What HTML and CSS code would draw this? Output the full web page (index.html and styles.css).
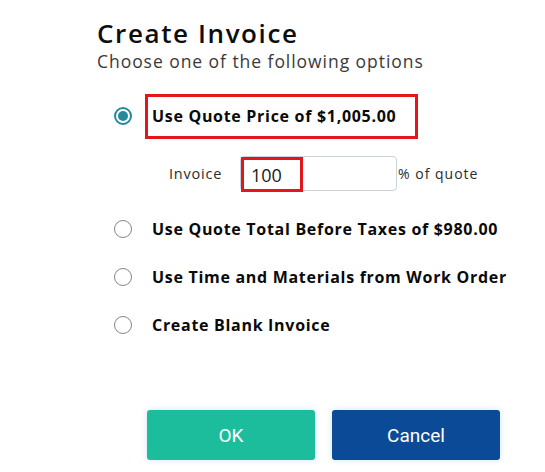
FILE: index.html
```html
<!DOCTYPE html>
<html>
<head>
<meta charset="utf-8">
<link rel="stylesheet" href="styles.css">
</head>
<body>
<div class="dialog">
  <header class="head">
    <h1 class="title">Create Invoice</h1>
    <p class="subtitle">Choose one of the following options</p>
  </header>
  <div class="options">
    <div class="option option-first">
      <span class="radio radio-on"></span>
      <span class="label label-boxed">Use Quote Price of $1,005.00</span>
    </div>
    <div class="pct-row">
      <span class="pct-label">Invoice</span>
      <div class="pct-input">
        <span class="pct-value">100</span>
      </div>
      <span class="pct-suffix">% of quote</span>
    </div>
    <div class="option">
      <span class="radio"></span>
      <span class="label">Use Quote Total Before Taxes of $980.00</span>
    </div>
    <div class="option">
      <span class="radio"></span>
      <span class="label">Use Time and Materials from Work Order</span>
    </div>
    <div class="option">
      <span class="radio"></span>
      <span class="label">Create Blank Invoice</span>
    </div>
  </div>
  <div class="actions">
    <button class="btn btn-ok">OK</button>
    <button class="btn btn-cancel">Cancel</button>
  </div>
</div>
</body>
</html>
```

FILE: styles.css
```css
* { box-sizing: border-box; }
html, body { margin: 0; padding: 0; background: #fff; }
body { font-family: "Open Sans", "DejaVu Sans", sans-serif; color: #111; }

.dialog {
  width: 545px;
  height: 472px;
  padding: 17px 0 0 97px;
  display: flex;
  flex-direction: column;
}
.head { display: flex; flex-direction: column; }
.title {
  margin: 0;
  font-size: 26px;
  font-weight: 600;
  line-height: 32px;
  letter-spacing: 1.6px;
  color: #0d0d0d;
}
.subtitle {
  margin: 0;
  font-size: 17.5px;
  line-height: 24px;
  letter-spacing: 0.95px;
  color: #3a3a3a;
}

.options {
  display: flex;
  flex-direction: column;
  padding-left: 17px;
  margin-top: 18px;
}
.option {
  display: flex;
  align-items: center;
  height: 48px;
}
.option-first { height: 50px; }
.radio {
  width: 18px;
  height: 18px;
  border-radius: 50%;
  border: 1.5px solid #858585;
  flex: none;
  display: flex;
  align-items: center;
  justify-content: center;
}
.radio-on { border: 2px solid #24899b; }
.radio-on::after {
  content: "";
  width: 10px;
  height: 10px;
  border-radius: 50%;
  background: #24899b;
}
.label {
  margin-left: 20px;
  font-size: 16px;
  font-weight: 700;
  letter-spacing: 0.7px;
  line-height: 22px;
  color: #0a0a0a;
  white-space: nowrap;
}
.label-boxed {
  margin-left: 13px;
  border: 3px solid #e4161b;
  padding: 8px 19px 9px 4px;
}

.pct-row {
  display: flex;
  align-items: center;
  padding-left: 55px;
  height: 64px;
}
.pct-label {
  font-size: 14.5px;
  letter-spacing: 0.8px;
  color: #2b2b2b;
  width: 71px;
}
.pct-input {
  width: 157px;
  height: 35px;
  border: 1px solid #c9d3dc;
  border-radius: 4px;
  display: flex;
  align-items: center;
}
.pct-value {
  font-size: 18px;
  color: #1a1a1a;
  border: 3px solid #e4161b;
  width: 62px;
  height: 35px;
  margin-top: 3px;
  padding: 0 0 0 7px;
  display: flex;
  align-items: center;
}
.pct-suffix {
  font-size: 14px;
  letter-spacing: 1px;
  color: #2b2b2b;
  margin-left: 1px;
}

.actions {
  display: flex;
  gap: 17px;
  margin-top: auto;
  margin-bottom: 12px;
  padding-left: 50px;
}
.btn {
  width: 168px;
  height: 50px;
  border: none;
  border-radius: 3px;
  font-family: Roboto, "Liberation Sans", sans-serif;
  font-size: 19px;
  color: #fff;
  box-shadow: 0 0 6px rgba(120, 190, 230, 0.35);
}
.btn-ok { background: #1bbd9c; }
.btn-cancel { background: #0a4a96; }
```
